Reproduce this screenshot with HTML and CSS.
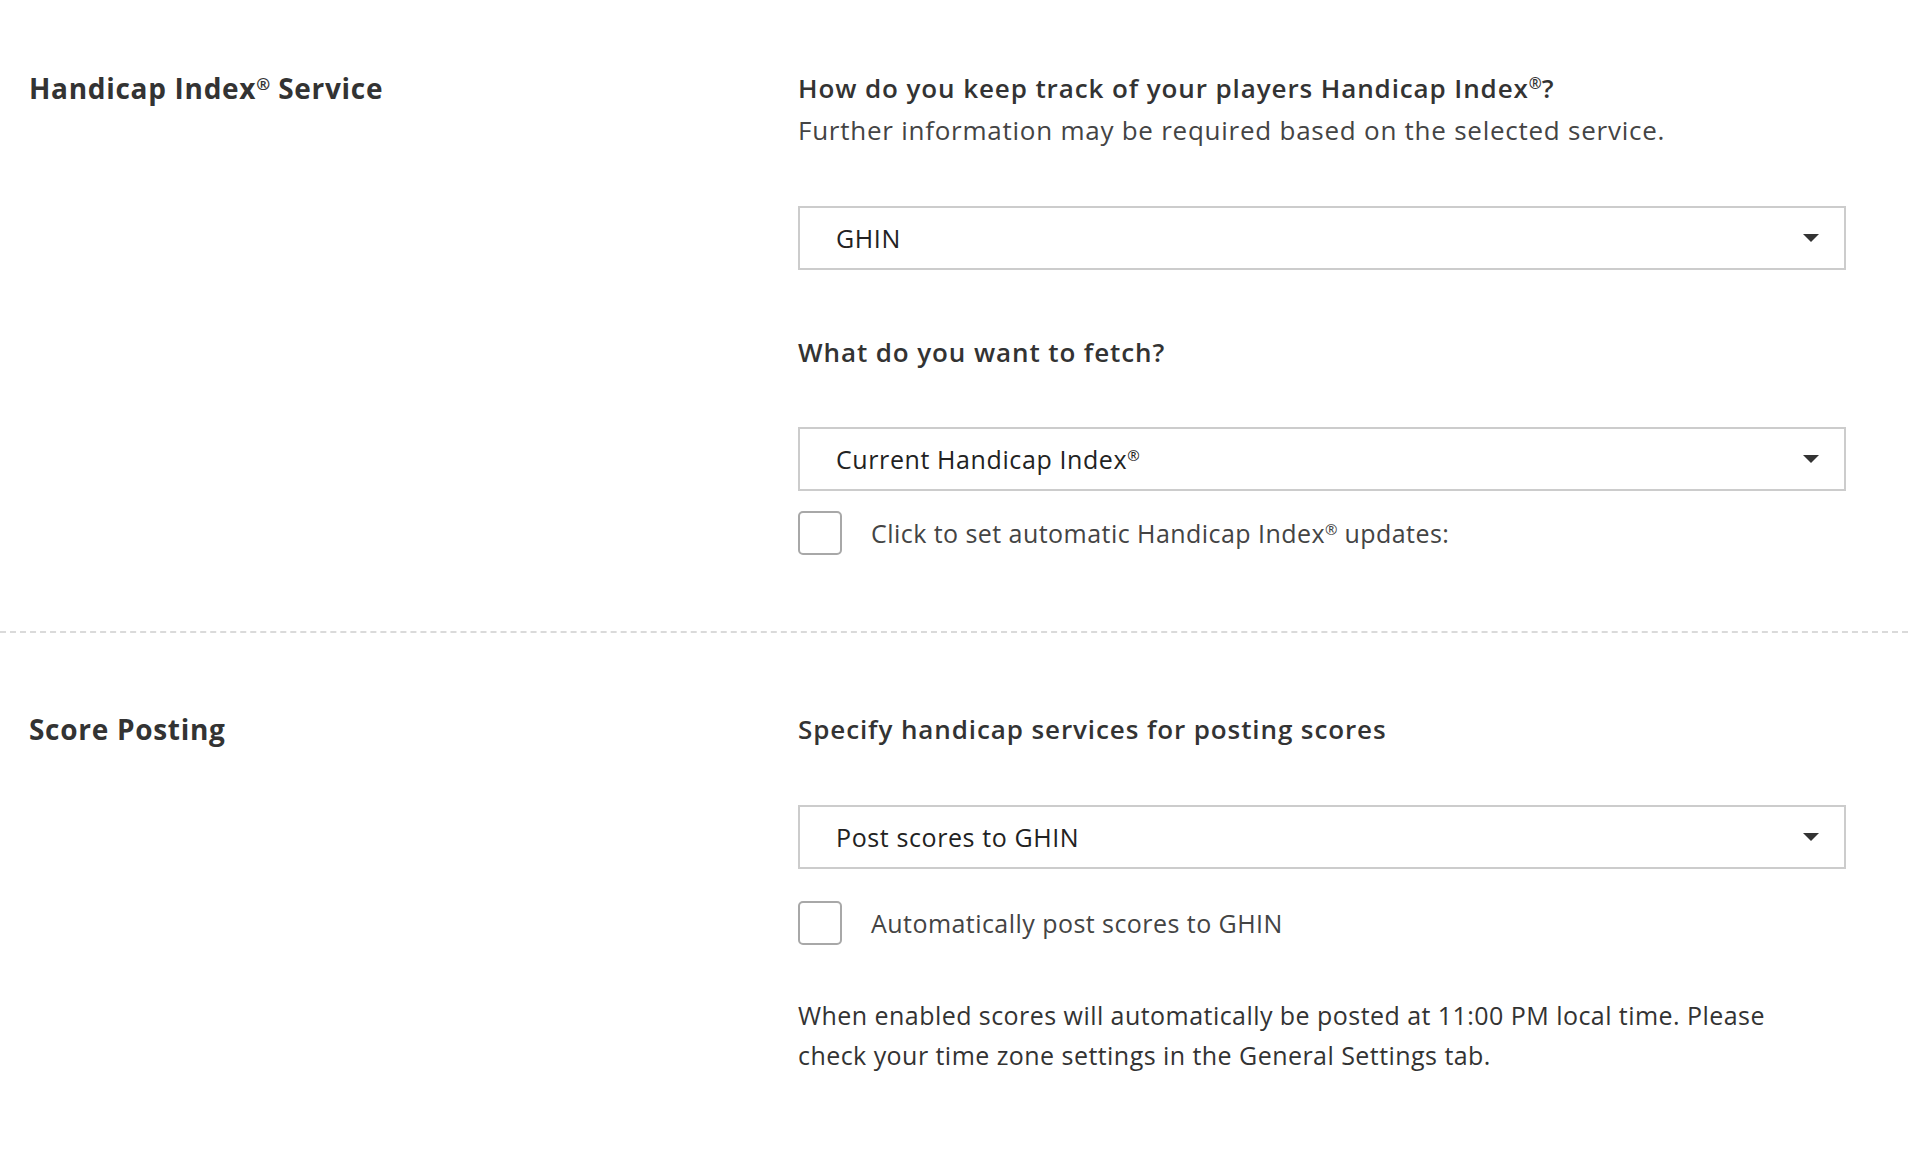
FILE: index.html
```html
<!DOCTYPE html>
<html lang="en">
<head>
<meta charset="utf-8">
<title>Handicap settings</title>
<link rel="stylesheet" href="styles.css">
</head>
<body>
<main class="page">
  <section class="section section-first">
    <h2 class="section-title">Handicap Index<sup class="reg">®</sup> Service</h2>
    <div class="section-body">
      <h3 class="question">How do you keep track of your players Handicap Index<sup class="reg">®</sup>?</h3>
      <p class="hint">Further information may be required based on the selected service.</p>
      <div class="select select-service">
        <span class="select-value">GHIN</span>
        <span class="caret"></span>
      </div>
      <h3 class="question question-fetch">What do you want to fetch?</h3>
      <div class="select select-fetch">
        <span class="select-value">Current Handicap Index<sup class="reg">®</sup></span>
        <span class="caret"></span>
      </div>
      <label class="check check-first">
        <span class="box"></span>
        <span class="check-label">Click to set automatic Handicap Index<sup class="reg">®</sup> updates:</span>
      </label>
    </div>
  </section>
  <section class="section section-second">
    <h2 class="section-title">Score Posting</h2>
    <div class="section-body">
      <h3 class="question">Specify handicap services for posting scores</h3>
      <div class="select select-post">
        <span class="select-value">Post scores to GHIN</span>
        <span class="caret"></span>
      </div>
      <label class="check check-second">
        <span class="box"></span>
        <span class="check-label">Automatically post scores to GHIN</span>
      </label>
      <p class="note">When enabled scores will automatically be posted at 11:00 PM local time. Please check your time zone settings in the General Settings tab.</p>
    </div>
  </section>
</main>
</body>
</html>
```
FILE: styles.css
```css
* { box-sizing: border-box; }
html, body { margin: 0; padding: 0; background: #ffffff; }
body {
  font-family: "Open Sans", Lato, "Liberation Sans", sans-serif;
  color: #333333;
  width: 1908px;
  height: 1152px;
  overflow: hidden;
}
.page { display: block; }
.section {
  display: grid;
  grid-template-columns: 769px 1048px;
  padding-left: 29px;
}
.section-first { padding-top: 70px; padding-bottom: 76px; border-bottom: 2px dashed #dadada; }
.section-second { padding-top: 78px; }
.section-title {
  margin: 0;
  font-size: 28px;
  line-height: 36px;
  font-weight: 700;
  letter-spacing: 0.7px;
  color: #333333;
}
.reg { font-size: 0.6em; vertical-align: 0.55em; line-height: 0; font-weight: inherit; letter-spacing: 0; }
.section-body { display: flex; flex-direction: column; align-items: stretch; }
.question {
  margin: 0;
  font-size: 26px;
  line-height: 36px;
  font-weight: 600;
  letter-spacing: 0.9px;
  color: #333333;
}
.hint {
  margin: 4px 0 0;
  font-size: 26px;
  line-height: 40px;
  letter-spacing: 0.75px;
  color: #444444;
}
.select {
  display: flex;
  align-items: center;
  justify-content: space-between;
  height: 64px;
  border: 2px solid #cccccc;
  padding: 0 25px 0 36px;
  background: #ffffff;
  font-size: 25px;
  letter-spacing: 0.6px;
  color: #222222;
}
.select-service { margin-top: 56px; }
.question-fetch { margin-top: 64px; }
.select-fetch { margin-top: 57px; }
.select-post { margin-top: 58px; }
.caret {
  width: 0; height: 0;
  border-left: 8px solid transparent;
  border-right: 8px solid transparent;
  border-top: 8px solid #333333;
}
.check { display: flex; align-items: center; gap: 29px; }
.check-first { margin-top: 20px; }
.check-second { margin-top: 32px; }
.box {
  width: 44px; height: 44px;
  border: 2px solid #a8a8a8;
  border-radius: 5px;
  background: #ffffff;
  flex: none;
}
.check-label { font-size: 25px; line-height: 36px; letter-spacing: 0.45px; color: #444444; }
.note {
  margin: 50px 0 0;
  max-width: 1020px;
  font-size: 25px;
  line-height: 40px;
  letter-spacing: 0.45px;
  color: #333333;
}
```
